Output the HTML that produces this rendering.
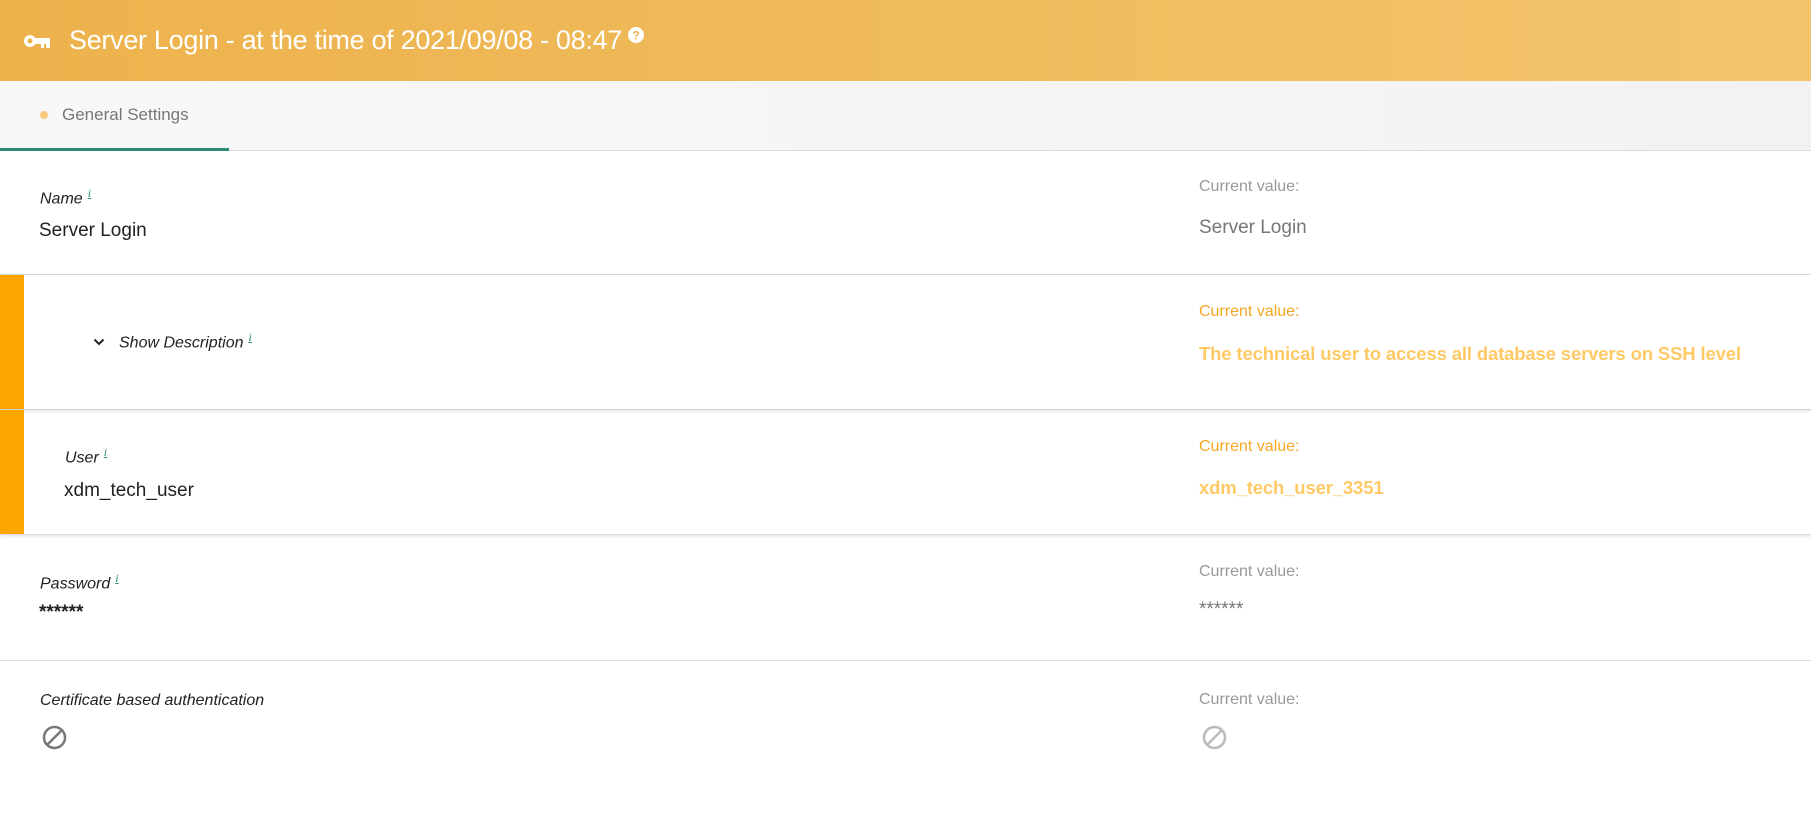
<!DOCTYPE html>
<html><head><meta charset="utf-8">
<style>
*{margin:0;padding:0;box-sizing:border-box}
body{width:1811px;height:821px;background:#fff;font-family:"Liberation Sans",sans-serif;position:relative;overflow:hidden}
.hdr{position:absolute;left:0;top:0;width:1811px;height:81px;background:linear-gradient(90deg,#edb24c,#f3c46c)}
.hdr .t{position:absolute;left:69px;top:25px;color:#fff;font-size:27px;letter-spacing:-0.3px}
.tabs{position:absolute;left:0;top:81px;width:1811px;height:70px;background:linear-gradient(90deg,#f8f8f8,#f2f2f2);border-bottom:1px solid #ddd}
.tabs .dot{position:absolute;left:40px;top:30px;width:8px;height:8px;border-radius:50%;background:#f9c97f}
.tabs .lb{position:absolute;left:62px;top:24px;font-size:17px;color:#777}
.tabs .ul{position:absolute;left:0;bottom:-1px;width:229px;height:3px;background:#2a8c78}
.row{position:absolute;left:0;width:1811px;border-bottom:1px solid #ddd}
.sh{box-shadow:0 1px 4px rgba(0,0,0,0.12);z-index:2}
.bar{position:absolute;left:0;top:0;bottom:0;width:24px;background:#ffa500}
.lab{position:absolute;font-style:italic;font-size:16px;color:#222}
.lab sup{color:#2a8c78;font-size:12px;margin-left:5px;font-family:"Liberation Serif",serif;text-decoration:underline}
.val{position:absolute;font-size:19px;color:#222}
.cl{position:absolute;left:1199px;font-size:16px;color:#999}
.cv{position:absolute;left:1199px;font-size:19px;color:#777}
.o .cl{color:#f5a623}
.o .cv{color:#ffc966;font-weight:bold;font-size:18.5px;letter-spacing:-0.15px}
</style></head><body>
<div class="hdr">
<svg style="position:absolute;left:23px;top:33px" width="28" height="16" viewBox="0 0 28 16"><circle cx="7" cy="8" r="6" fill="#fff"/><circle cx="7" cy="8" r="2.5" fill="#efb650"/><rect x="12" y="5" width="15" height="6" fill="#fff"/><rect x="18" y="10" width="3" height="5" fill="#fff"/><rect x="23" y="10" width="4" height="5" fill="#fff"/></svg>
<div class="t">Server Login - at the time of 2021/09/08 - 08:47</div>
<svg style="position:absolute;left:628px;top:27px" width="16" height="16" viewBox="0 0 16 16"><circle cx="8" cy="8" r="8" fill="#fff"/><text x="8" y="12.5" text-anchor="middle" font-size="12" font-weight="bold" fill="#eeb552" font-family="Liberation Sans">?</text></svg>
</div>
<div class="tabs"><div class="dot"></div><div class="lb">General Settings</div><div class="ul"></div></div>

<div class="row" style="top:151px;height:124px">
<div class="lab" style="left:40px;top:35px">Name<sup>i</sup></div>
<div class="val" style="left:39px;top:69px">Server Login</div>
<div class="cl" style="top:27px">Current value:</div>
<div class="cv" style="top:66px">Server Login</div>
</div>

<div class="row sh o" style="top:275px;height:135px">
<div class="bar"></div>
<svg style="position:absolute;left:93px;top:63px" width="12" height="8" viewBox="0 0 12 8"><path d="M1.5 1.5L6 6L10.5 1.5" stroke="#222" stroke-width="2" fill="none"/></svg>
<div class="lab" style="left:119px;top:55px">Show Description<sup>i</sup></div>
<div class="cl" style="top:28px">Current value:</div>
<div class="cv" style="top:68px">The technical user to access all database servers on SSH level</div>
</div>

<div class="row sh o" style="top:410px;height:125px">
<div class="bar"></div>
<div class="lab" style="left:65px;top:35px">User<sup>i</sup></div>
<div class="val" style="left:64px;top:70px">xdm_tech_user</div>
<div class="cl" style="top:28px">Current value:</div>
<div class="cv" style="top:67px">xdm_tech_user_3351</div>
</div>

<div class="row" style="top:535px;height:126px">
<div class="lab" style="left:40px;top:36px">Password<sup>i</sup></div>
<div class="val" style="left:39px;top:67px;font-weight:bold">******</div>
<div class="cl" style="top:28px">Current value:</div>
<div class="cv" style="top:64px">******</div>
</div>

<div style="position:absolute;top:661px;left:0;width:1811px;height:160px">
<div class="lab" style="left:40px;top:31px">Certificate based authentication</div>
<svg style="position:absolute;left:42px;top:64px" width="25" height="25" viewBox="0 0 25 25"><circle cx="12.5" cy="12.5" r="10.5" stroke="#777" stroke-width="2.5" fill="none"/><path d="M5.5 19.5L19.5 5.5" stroke="#777" stroke-width="2.5"/></svg>
<div class="cl" style="top:30px">Current value:</div>
<svg style="position:absolute;left:1202px;top:64px" width="25" height="25" viewBox="0 0 25 25"><circle cx="12.5" cy="12.5" r="10.5" stroke="#bbb" stroke-width="2.5" fill="none"/><path d="M5.5 19.5L19.5 5.5" stroke="#bbb" stroke-width="2.5"/></svg>
</div>
</body></html>
